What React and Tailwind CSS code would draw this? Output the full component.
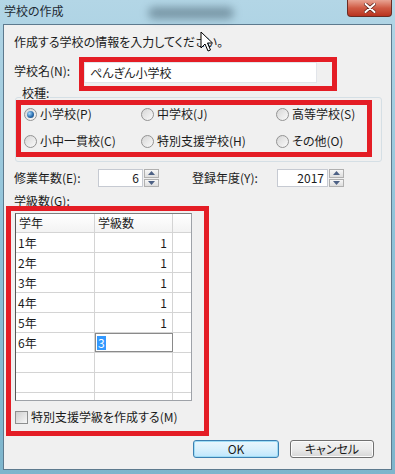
const RED = "border-[5px] border-[#e41d25]";

function Radio({ checked, label }) {
  return (
    <div className="flex items-center gap-[3px] h-[16px]">
      <span className="w-[13px] h-[13px] rounded-full border border-[#939393] bg-gradient-to-br from-[#d6d6d6] to-[#fafafa] flex items-center justify-center shrink-0">
        {checked && (
          <span className="w-[7px] h-[7px] rounded-full bg-[radial-gradient(circle_at_35%_35%,#a9dbff,#2a6eb0_55%,#163e6a)]" />
        )}
      </span>
      <span>{label}</span>
    </div>
  );
}

function Spin() {
  const btn =
    "flex-1 border border-[#b0b0b0] bg-gradient-to-b from-[#f7f7f7] to-[#dedede] flex items-center justify-center";
  return (
    <div className="flex flex-col w-[15px] h-[18px] ml-[1px] gap-[1px]">
      <div className={btn}>
        <svg width="7" height="4" viewBox="0 0 7 4">
          <path d="M0 4 L3.5 0 L7 4 Z" fill="#4d6185" />
        </svg>
      </div>
      <div className={btn}>
        <svg width="7" height="4" viewBox="0 0 7 4">
          <path d="M0 0 L3.5 4 L7 0 Z" fill="#4d6185" />
        </svg>
      </div>
    </div>
  );
}

function NumBox({ w, value }) {
  return (
    <div
      className={`${w} h-[18px] bg-white border border-[#c6cad2] flex items-center justify-end pr-[3px]`}
    >
      {value}
    </div>
  );
}

const rows = [
  ["1年", "1"],
  ["2年", "1"],
  ["3年", "1"],
  ["4年", "1"],
  ["5年", "1"],
];

function Row({ a, b, edit }) {
  return (
    <div className="flex h-[20px] border-b border-[#d4d4d4]">
      <div className="w-[79px] border-r border-[#d4d4d4] pl-[2px] flex items-center">{a}</div>
      {edit ? (
        <div className="w-[78px] border border-[#8a8a8a] bg-white flex items-center pl-[1px]">
          <span className="bg-[#3399ff] text-white leading-[14px] px-[1px]">{b}</span>
        </div>
      ) : (
        <div className="w-[78px] border-r border-[#d4d4d4] flex items-center justify-end pr-[5px]">{b}</div>
      )}
      <div className="flex-1" />
    </div>
  );
}

export default function App() {
  return (
    <div className="relative w-[395px] h-[474px] overflow-hidden bg-gradient-to-b from-[#b3d6e6] via-[#8fc2d8] to-[#7eb5cc] flex flex-col font-['Noto_Sans_CJK_JP','Noto_Sans',sans-serif] text-[12px] leading-[16px] text-[#1b1b1b] [font-feature-settings:'palt']">
      {/* title bar */}
      <div className="relative h-[24px] shrink-0 flex items-center pl-[4px] pb-[2px]">
        <span className="text-[12px] text-[#1e2a33]">学校の作成</span>
        <div className="absolute left-[148px] top-[7px] w-[86px] h-[12px] rounded-full bg-[#4a6473] opacity-55 blur-[4px]" />
        <div className="absolute right-[3px] top-0 w-[45px] h-[17px] rounded-b-[4px] border border-t-0 border-[#6a2b23] bg-gradient-to-b from-[#e8a393] via-[#cf5a44] to-[#b8321f] flex items-center justify-center">
          <svg width="12" height="10" viewBox="0 0 12 10">
            <path d="M1.5 1 L10.5 9 M10.5 1 L1.5 9" stroke="#5b1c14" strokeWidth="3.4" strokeLinecap="round" />
            <path d="M1.5 1 L10.5 9 M10.5 1 L1.5 9" stroke="#ffffff" strokeWidth="2" strokeLinecap="round" />
          </svg>
        </div>
      </div>

      {/* client area */}
      <div className="flex-1 mx-[3px] mb-[4px] border border-[#5d7a8e] bg-[#f0f0f0] flex flex-col">
        <div className="mt-[9px] ml-[10px]">作成する学校の情報を入力してください。</div>

        {/* school name */}
        <div className="mt-[7px] flex">
          <div className="ml-[10px] w-[65px] pt-[6px]">学校名(N):</div>
          <div className={`${RED} w-[258px] h-[34px]`}>
            <div className="w-[233px] h-[21px] bg-white border border-[#e2e5ea] flex items-center pl-[5px]">
              ぺんぎん小学校
            </div>
          </div>
        </div>

        {/* school type */}
        <fieldset className="mt-[-6px] ml-[11px] w-[367px] border border-[#d5dfe5] rounded-[3px] p-0 pb-[4px]">
          <legend className="ml-[5px] px-[1px] pb-[8px]">校種:</legend>
          <div className={`${RED} mt-[-9px] w-[356px] h-[57px] pl-[3px] pt-[1px]`}>
            <div className="grid grid-cols-[117px_135px_1fr] gap-y-[11px]">
              <Radio checked label="小学校(P)" />
              <Radio label="中学校(J)" />
              <Radio label="高等学校(S)" />
              <Radio label="小中一貫校(C)" />
              <Radio label="特別支援学校(H)" />
              <Radio label="その他(O)" />
            </div>
          </div>
        </fieldset>

        {/* numbers */}
        <div className="mt-[7px] flex items-center h-[18px]">
          <div className="ml-[10px] w-[84px]">修業年数(E):</div>
          <NumBox w="w-[45px]" value="6" />
          <Spin />
          <div className="ml-[33px] w-[85px]">登録年度(Y):</div>
          <NumBox w="w-[51px]" value="2017" />
          <Spin />
        </div>

        <div className="mt-[6px] ml-[10px]">学級数(G):</div>

        {/* class grid */}
        <div className={`${RED} mt-[-3px] ml-[2px] w-[203px] h-[230px] pl-[4px] pt-[2px]`}>
          <div className="w-[177px] h-[188px] border border-[#9ea2a8] border-l-[#555] border-t-[#7d7d7d] bg-white overflow-hidden">
            <div className="flex h-[19px] border-b border-[#d4d4d4] bg-gradient-to-b from-white to-[#f3f3f3]">
              <div className="w-[79px] border-r border-[#d4d4d4] pl-[3px] flex items-center">学年</div>
              <div className="w-[78px] border-r border-[#d4d4d4] pl-[3px] flex items-center">学級数</div>
              <div className="flex-1" />
            </div>
            {rows.map(([a, b]) => (
              <Row key={a} a={a} b={b} />
            ))}
            <Row a="6年" b="3" edit />
            <Row a="" b="" />
            <Row a="" b="" />
            <Row a="" b="" />
          </div>
          <div className="mt-[8px] flex items-center gap-[3px]">
            <span className="w-[13px] h-[13px] border border-[#8e8f8f] bg-gradient-to-br from-[#cfcfcf] to-[#f7f7f7]" />
            <span>特別支援学級を作成する(M)</span>
          </div>
        </div>

        {/* buttons */}
        <div className="mt-[4px] flex justify-end gap-[11px] pr-[17px]">
          <button className="w-[86px] h-[18px] rounded-[3px] border border-[#3c7fb1] bg-gradient-to-b from-[#eaf6fd] via-[#d9f0fc] to-[#bee6fd] shadow-[inset_0_0_0_1px_#9edcf5] text-[12px] leading-[16px]">
            OK
          </button>
          <button className="w-[84px] h-[18px] rounded-[3px] border border-[#707070] bg-gradient-to-b from-[#f2f2f2] via-[#ebebeb] to-[#d6d6d6] shadow-[inset_0_0_0_1px_#fcfcfc] text-[12px] leading-[16px]">
            キャンセル
          </button>
        </div>
      </div>

      {/* mouse cursor */}
      <svg className="absolute left-[200px] top-[31px]" width="14" height="22" viewBox="0 0 14 22">
        <path d="M1 1 L1 17 L5 13 L8 20 L10.5 19 L7.5 12 L12.5 12 Z" fill="#fff" stroke="#000" strokeWidth="1" strokeLinejoin="round" />
      </svg>
    </div>
  );
}
